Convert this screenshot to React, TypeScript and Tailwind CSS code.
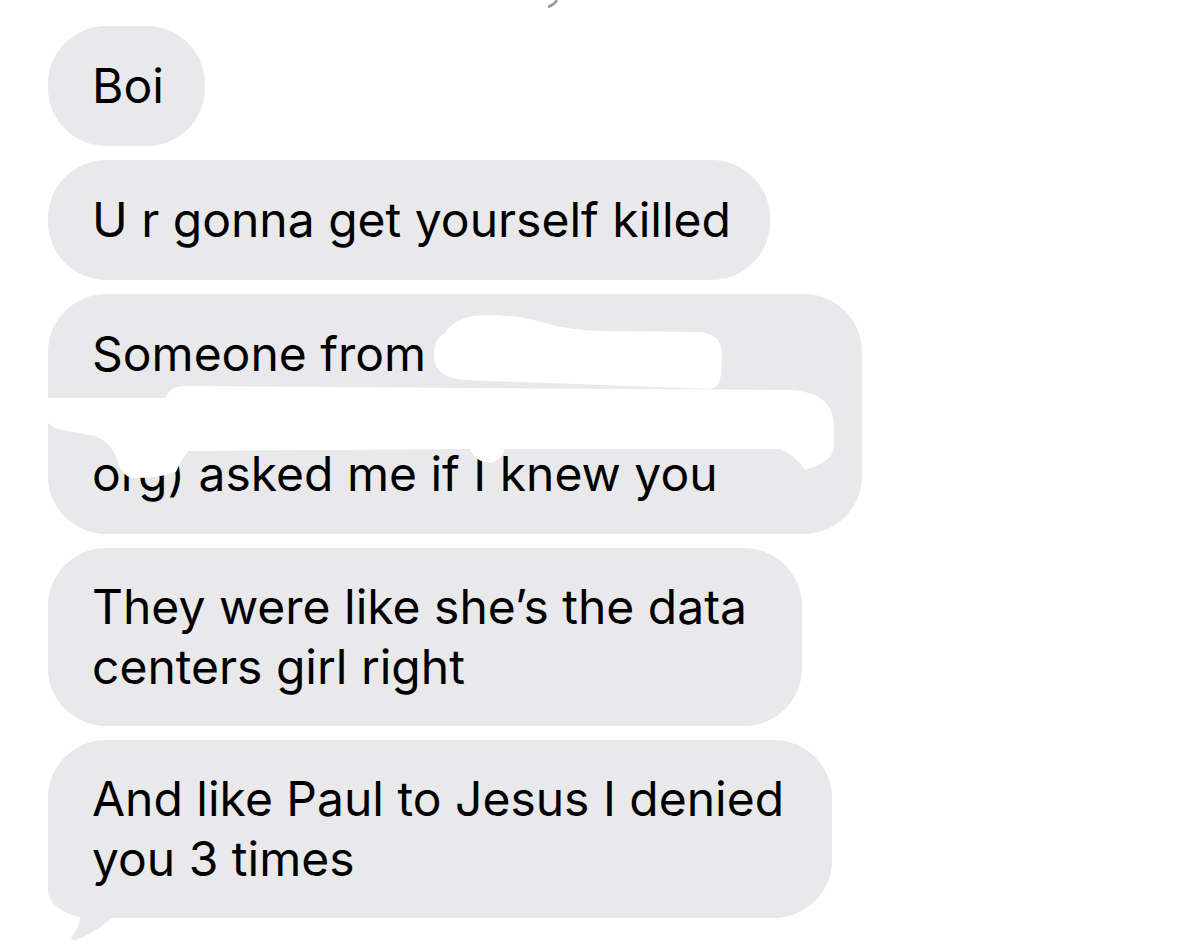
import React from "react";

const bubble =
  "relative rounded-[58px] bg-[#e9e9eb] px-[44px] text-[48px] leading-[60px] text-black whitespace-nowrap";

export default function App() {
  return (
    <div
      className="relative min-h-[946px] w-[1179px] overflow-hidden bg-white"
      style={{ fontFamily: "Inter, 'Liberation Sans', Arial, sans-serif" }}
    >
      <div className="flex flex-col items-start gap-[14px] pl-[48px] pt-[26px]">
        <div className={`${bubble} w-[157px] py-[30px]`}>Boi</div>
        <div className={`${bubble} w-[722px] py-[30px]`}>U r gonna get yourself killed</div>
        <div className={`${bubble} w-[814px] py-[30px]`}>
          <div>Someone from</div>
          <div>&nbsp;</div>
          <div>org) asked me if I knew you</div>
        </div>
        <div className={`${bubble} w-[754px] py-[29px]`}>
          <div>They were like she’s the data</div>
          <div>centers girl right</div>
        </div>
        <div className={`${bubble} w-[784px] py-[29px]`}>
          <svg
            className="absolute left-0 bottom-[-26px]"
            width="80"
            height="96"
            viewBox="0 0 80 96"
          >
            <path
              d="M 0 0 L 0 44 C 2 58 18 66 32 69 C 31 78 28 84 24 88 C 22 91 25 93 28 92 C 42 87 54 78 64 70 L 80 70 L 80 0 Z"
              fill="#e9e9eb"
            />
          </svg>
          <div className="relative">And like Paul to Jesus I denied</div>
          <div className="relative">you 3 times</div>
        </div>
      </div>

      <svg
        className="pointer-events-none absolute left-0 top-0"
        width="1179"
        height="946"
        viewBox="0 0 1179 946"
      >
        <path d="M 557 0 Q 554 5 548 7" stroke="#9a9a9a" strokeWidth="2.5" fill="none" />
        <path
          d="M 445 333 Q 455 316 485 315 Q 520 315 545 323 Q 570 330 600 331 L 700 332 Q 722 334 722 355 L 721 375 Q 719 388 710 389 L 465 380 Q 438 378 434 360 Q 432 340 445 333 Z"
          fill="#ffffff"
        />
        <path
          d="M 40 398 L 165 398 Q 170 387 182 386 L 790 390 Q 833 392 834 425 L 834 448 Q 832 462 805 470 Q 795 455 780 449 L 505 449 Q 500 462 490 463 Q 475 462 470 449 L 188 451 Q 180 462 176 472 Q 160 478 132 478 Q 122 476 118 462 Q 112 442 95 436 Q 70 432 55 428 Q 48 424 44 418 L 40 418 Z"
          fill="#ffffff"
        />
      </svg>
    </div>
  );
}
